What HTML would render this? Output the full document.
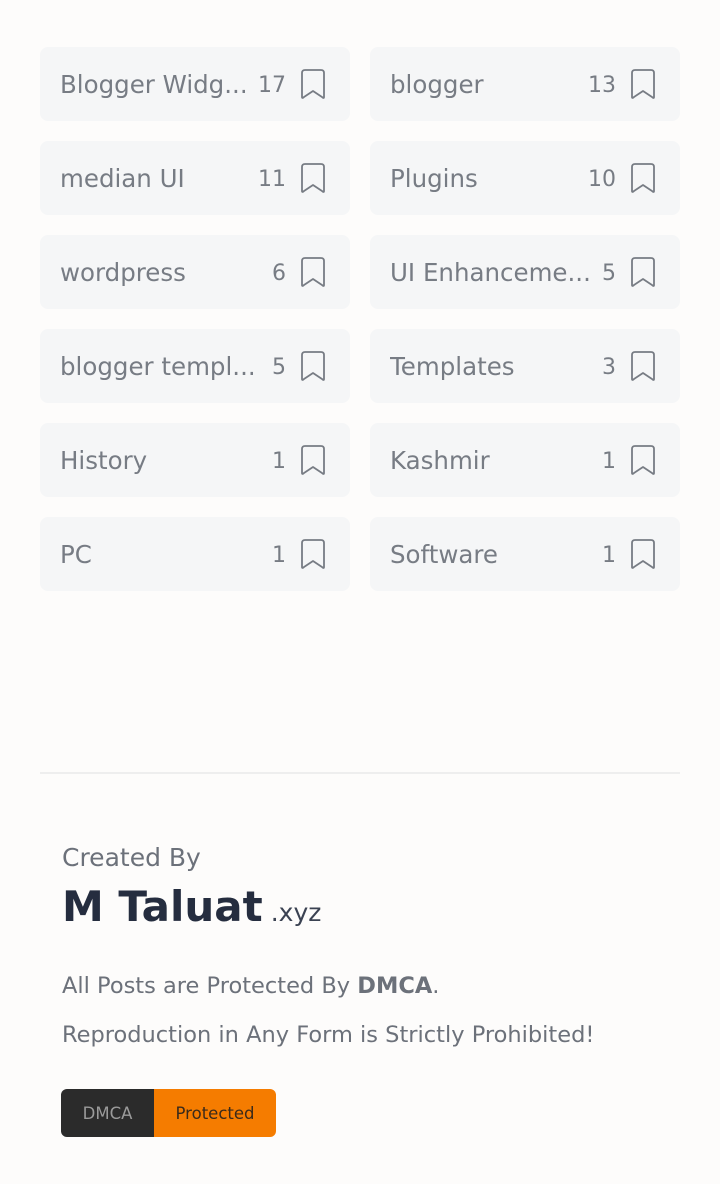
<!DOCTYPE html>
<html><head><meta charset="utf-8"><style>
*{margin:0;padding:0;box-sizing:border-box}
body{width:720px;height:1184px;background:#fdfcfb;font-family:"DejaVu Sans",sans-serif;position:relative;overflow:hidden}
.grid{position:absolute;left:40px;top:47px;width:640px;display:grid;grid-template-columns:310px 310px;column-gap:20px;row-gap:20px}
.c{height:74px;background:#f5f6f7;border-radius:8px;display:flex;align-items:center;padding-left:20px;color:#777c84;font-size:24.5px}
.c .n{flex:1;white-space:nowrap;overflow:hidden}
.c .k{font-size:22px;margin-left:8px;padding-top:3px}
.c svg{margin:0 24px 0 14px;flex:none}
.line{position:absolute;left:40px;top:772px;width:640px;height:2px;background:#eeeeee}
.t{position:absolute;left:62px;color:#6c717a;white-space:nowrap}
</style></head><body>
<div class="grid">
<div class="c"><span class="n">Blogger Widg...</span><span class="k">17</span><svg width="26" height="32" viewBox="0 0 26 32"><path d="M2 5Q2 2 5 2H21Q24 2 24 5V29Q24 31 22 29L13 23L4 29Q2 31 2 29Z" fill="none" stroke="#777c84" stroke-width="1.8" stroke-linejoin="round"/></svg></div>
<div class="c"><span class="n">blogger</span><span class="k">13</span><svg width="26" height="32" viewBox="0 0 26 32"><path d="M2 5Q2 2 5 2H21Q24 2 24 5V29Q24 31 22 29L13 23L4 29Q2 31 2 29Z" fill="none" stroke="#777c84" stroke-width="1.8" stroke-linejoin="round"/></svg></div>
<div class="c"><span class="n">median UI</span><span class="k">11</span><svg width="26" height="32" viewBox="0 0 26 32"><path d="M2 5Q2 2 5 2H21Q24 2 24 5V29Q24 31 22 29L13 23L4 29Q2 31 2 29Z" fill="none" stroke="#777c84" stroke-width="1.8" stroke-linejoin="round"/></svg></div>
<div class="c"><span class="n">Plugins</span><span class="k">10</span><svg width="26" height="32" viewBox="0 0 26 32"><path d="M2 5Q2 2 5 2H21Q24 2 24 5V29Q24 31 22 29L13 23L4 29Q2 31 2 29Z" fill="none" stroke="#777c84" stroke-width="1.8" stroke-linejoin="round"/></svg></div>
<div class="c"><span class="n">wordpress</span><span class="k">6</span><svg width="26" height="32" viewBox="0 0 26 32"><path d="M2 5Q2 2 5 2H21Q24 2 24 5V29Q24 31 22 29L13 23L4 29Q2 31 2 29Z" fill="none" stroke="#777c84" stroke-width="1.8" stroke-linejoin="round"/></svg></div>
<div class="c"><span class="n">UI Enhanceme...</span><span class="k">5</span><svg width="26" height="32" viewBox="0 0 26 32"><path d="M2 5Q2 2 5 2H21Q24 2 24 5V29Q24 31 22 29L13 23L4 29Q2 31 2 29Z" fill="none" stroke="#777c84" stroke-width="1.8" stroke-linejoin="round"/></svg></div>
<div class="c"><span class="n">blogger templ...</span><span class="k">5</span><svg width="26" height="32" viewBox="0 0 26 32"><path d="M2 5Q2 2 5 2H21Q24 2 24 5V29Q24 31 22 29L13 23L4 29Q2 31 2 29Z" fill="none" stroke="#777c84" stroke-width="1.8" stroke-linejoin="round"/></svg></div>
<div class="c"><span class="n">Templates</span><span class="k">3</span><svg width="26" height="32" viewBox="0 0 26 32"><path d="M2 5Q2 2 5 2H21Q24 2 24 5V29Q24 31 22 29L13 23L4 29Q2 31 2 29Z" fill="none" stroke="#777c84" stroke-width="1.8" stroke-linejoin="round"/></svg></div>
<div class="c"><span class="n">History</span><span class="k">1</span><svg width="26" height="32" viewBox="0 0 26 32"><path d="M2 5Q2 2 5 2H21Q24 2 24 5V29Q24 31 22 29L13 23L4 29Q2 31 2 29Z" fill="none" stroke="#777c84" stroke-width="1.8" stroke-linejoin="round"/></svg></div>
<div class="c"><span class="n">Kashmir</span><span class="k">1</span><svg width="26" height="32" viewBox="0 0 26 32"><path d="M2 5Q2 2 5 2H21Q24 2 24 5V29Q24 31 22 29L13 23L4 29Q2 31 2 29Z" fill="none" stroke="#777c84" stroke-width="1.8" stroke-linejoin="round"/></svg></div>
<div class="c"><span class="n">PC</span><span class="k">1</span><svg width="26" height="32" viewBox="0 0 26 32"><path d="M2 5Q2 2 5 2H21Q24 2 24 5V29Q24 31 22 29L13 23L4 29Q2 31 2 29Z" fill="none" stroke="#777c84" stroke-width="1.8" stroke-linejoin="round"/></svg></div>
<div class="c"><span class="n">Software</span><span class="k">1</span><svg width="26" height="32" viewBox="0 0 26 32"><path d="M2 5Q2 2 5 2H21Q24 2 24 5V29Q24 31 22 29L13 23L4 29Q2 31 2 29Z" fill="none" stroke="#777c84" stroke-width="1.8" stroke-linejoin="round"/></svg></div>
</div>
<div class="line"></div>
<div class="t" style="top:843px;font-size:25px">Created By</div>
<div class="t" style="top:882px;font-size:42px;font-weight:bold;color:#252d3f">M Taluat<span style="font-size:25px;font-weight:normal;color:#3b4252;margin-left:8px">.xyz</span></div>
<div class="t" style="top:973px;font-size:22.5px">All Posts are Protected By <b>DMCA</b>.</div>
<div class="t" style="top:1022px;font-size:22.5px">Reproduction in Any Form is Strictly Prohibited!</div>
<div style="position:absolute;left:61px;top:1089px;width:215px;height:48px;border-radius:6px;overflow:hidden;display:flex;font-size:16.5px">
<div style="width:93px;background:#2b2b2b;color:#9a9a9a;display:flex;align-items:center;justify-content:center">DMCA</div>
<div style="flex:1;background:#f57c00;color:#3a2a1a;display:flex;align-items:center;justify-content:center">Protected</div>
</div>
</body></html>
